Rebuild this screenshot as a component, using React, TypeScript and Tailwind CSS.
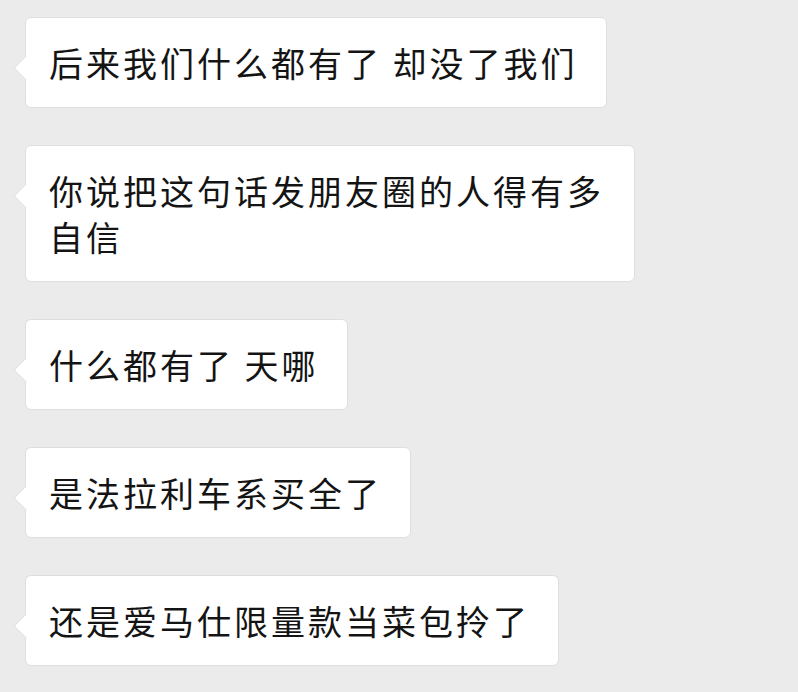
import React from 'react';

const messages = [
  '后来我们什么都有了 却没了我们',
  '你说把这句话发朋友圈的人得有多自信',
  '什么都有了 天哪',
  '是法拉利车系买全了',
  '还是爱马仕限量款当菜包拎了',
];

function Bubble({ text }: { text: string }) {
  return (
    <div className="relative w-fit max-w-[610px] rounded-[6px] bg-white border border-[#dedede] pl-[23px] pr-[28px] py-[21.5px] text-[34px] leading-[46px] tracking-[3px] text-[#141414]">
      <span className="absolute left-[-9px] top-[41px] w-[18px] h-[18px] rotate-45 bg-white border-l border-b border-[#dedede]" />
      <span className="relative">{text}</span>
    </div>
  );
}

export default function App() {
  return (
    <div
      className="w-[798px] h-[692px] overflow-hidden bg-[#ebebeb] pt-[17px] pl-[25px] flex flex-col gap-[37px]"
      style={{ fontFamily: '"Noto Sans CJK SC", "Noto Sans", sans-serif' }}
    >
      {messages.map((m, i) => (
        <Bubble key={i} text={m} />
      ))}
    </div>
  );
}
